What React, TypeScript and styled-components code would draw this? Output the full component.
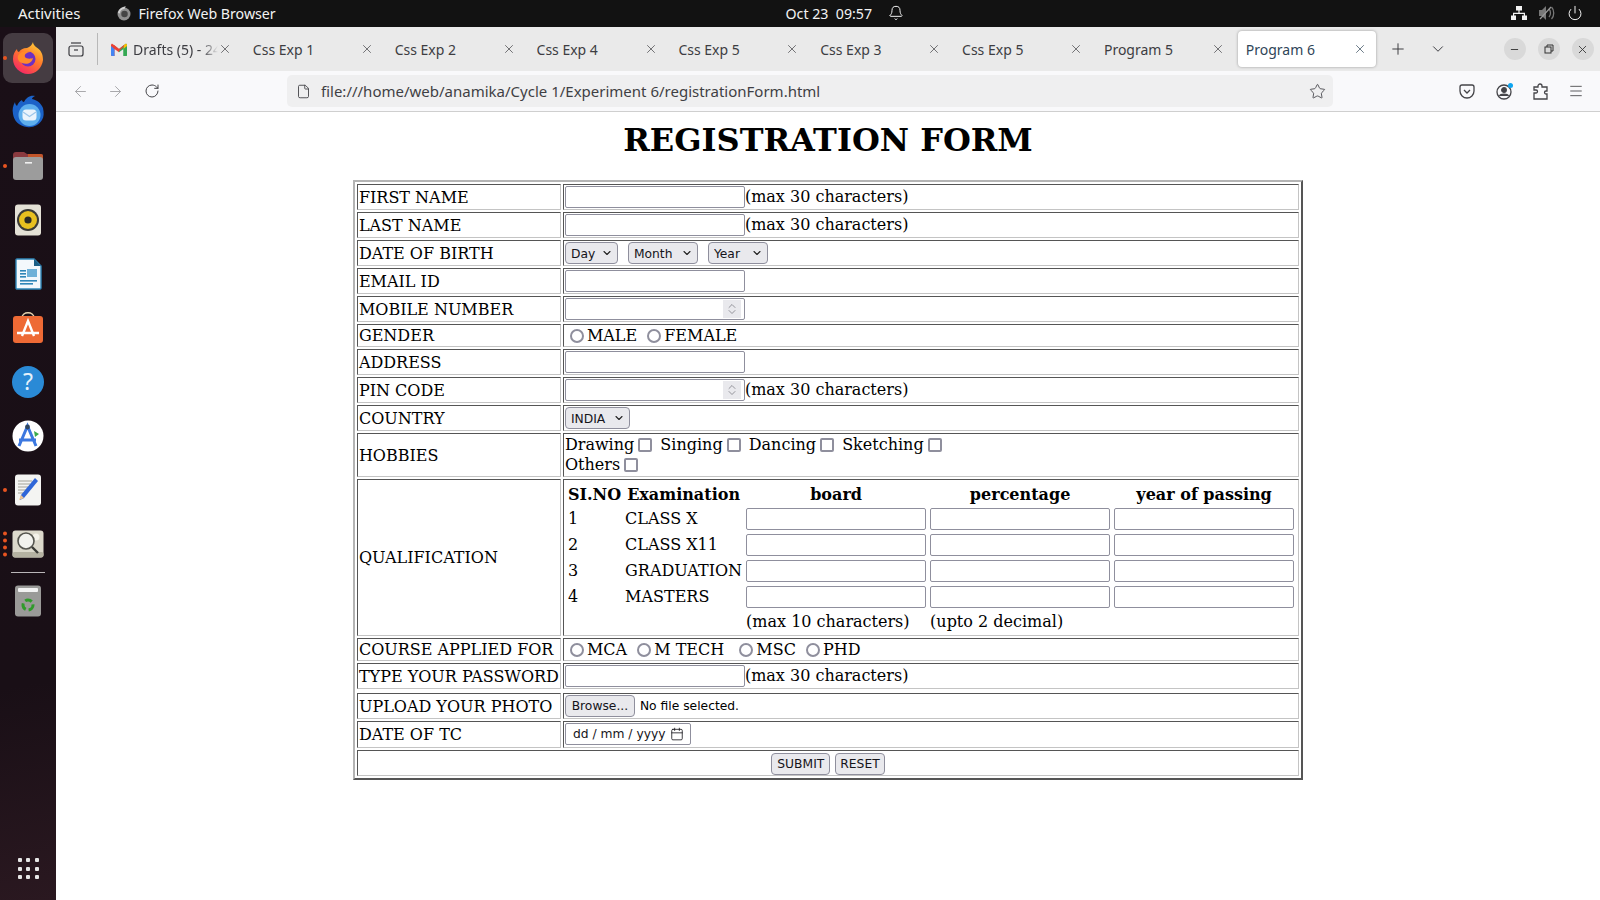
import styled, { createGlobalStyle } from "styled-components"
import { ArrowLeft, ArrowRight, RotateCw, Plus, ChevronDown, ChevronUp, X, Minus, Star, Menu, File, Bell, Power, Calendar } from "lucide-react"

const GlobalStyle = createGlobalStyle`
    html, body {
        margin: 0;
        padding: 0;
        background: #ffffff;
        overflow: hidden;
    }
`
const uiFont = `"Noto Sans", "Open Sans", sans-serif`
const formFont = `"DejaVu Serif", serif`
const controlFont = `"DejaVu Sans", sans-serif`

const Screen = styled.div`
    width: 1600px;
    height: 900px;
    display: flex;
    flex-direction: column;
    overflow: hidden;
`
const TopBar = styled.div`
    height: 27px;
    flex: none;
    background: #121212;
    color: #f2f2f2;
    font-family: ${uiFont};
    font-size: 14.2px;
    display: flex;
    align-items: center;
    padding: 0 17px 1px 18px;
    box-sizing: border-box;
`
const Activities = styled.span`
    font-size: 15px;
`
const AppName = styled.div`
    display: flex;
    align-items: center;
    gap: 7px;
    margin-left: 35px;
    width: 670px;
`
const Clock = styled.div`
    display: flex;
    align-items: center;
    white-space: pre;
    gap: 16px;
`
const Tray = styled.div`
    margin-left: auto;
    display: flex;
    align-items: center;
    gap: 12px;
`
const Main = styled.div`
    flex: 1;
    display: flex;
    min-height: 0;
`
const Dock = styled.div`
    width: 56px;
    flex: none;
    background: linear-gradient(170deg, #1a0f17 0%, #190f16 75%, #2a1820 100%);
    display: flex;
    flex-direction: column;
    align-items: center;
    padding-top: 6px;
    box-sizing: border-box;
`
const DockSlot = styled.div<{ $active?: boolean; $h?: number }>`
    position: relative;
    width: 50px;
    height: ${p => p.$h ?? 54}px;
    flex: none;
    border-radius: 9px;
    background: ${p => (p.$active ? "#453c42" : "transparent")};
    display: flex;
    align-items: center;
    justify-content: center;
`
const RunDots = styled.div`
    position: absolute;
    left: 0;
    top: 50%;
    transform: translateY(-50%);
    display: flex;
    flex-direction: column;
    gap: 3px;
`
const RunDot = styled.span`
    width: 4px;
    height: 4px;
    border-radius: 50%;
    background: #e95420;
`
const DockLine = styled.div`
    width: 34px;
    height: 1px;
    background: #b9b5b8;
    margin-top: 1px;
    margin-bottom: 2px;
    flex: none;
`
const GridButton = styled.div`
    margin-top: auto;
    margin-bottom: 21px;
    display: grid;
    grid-template-columns: repeat(3, 4px);
    gap: 4.5px;
`
const GridDot = styled.span`
    width: 4px;
    height: 4px;
    background: #e6e6e6;
    border-radius: 1px;
`
const Browser = styled.div`
    flex: 1;
    display: flex;
    flex-direction: column;
    min-width: 0;
`
const TabStrip = styled.div`
    height: 44px;
    flex: none;
    background: #eaeaea;
    display: flex;
    align-items: center;
    font-family: ${uiFont};
    font-size: 14px;
    color: #3d3d42;
`
const TabListButton = styled.div`
    width: 42px;
    height: 32px;
    flex: none;
    border-right: 1px solid #b8b8b8;
    padding-right: 2px;
    display: flex;
    align-items: center;
    justify-content: center;
    box-sizing: border-box;
`
const Tabs = styled.div`
    display: flex;
    gap: 3.85px;
    margin-left: 5px;
`
const Tab = styled.div<{ $active?: boolean }>`
    width: 138px;
    height: 36px;
    box-sizing: border-box;
    display: flex;
    align-items: center;
    padding-left: 8px;
    padding-right: 9px;
    border-radius: 4px;
    background: ${p => (p.$active ? "#ffffff" : "transparent")};
    box-shadow: ${p => (p.$active ? "0 0 3px rgba(0,0,0,0.35)" : "none")};
    color: ${p => (p.$active ? "#2f4558" : "#3d3d42")};
`
const TabTitle = styled.span<{ $fade?: boolean }>`
    flex: 1;
    white-space: nowrap;
    overflow: hidden;
    ${p => (p.$fade ? "mask-image: linear-gradient(to right, #000 82%, transparent 100%);" : "")}
`
const TabIcon = styled.svg`
    margin-right: 6px;
    flex: none;
`
const StripButton = styled.div<{ $ml: number }>`
    margin-left: ${p => p.$ml}px;
    display: flex;
    color: #3a3a3f;
`
const WindowButton = styled.div<{ $ml: number }>`
    width: 22px;
    height: 22px;
    border-radius: 50%;
    background: #d9d9d9;
    margin-left: ${p => p.$ml}px;
    display: flex;
    align-items: center;
    justify-content: center;
    color: #333;
`
const NavBar = styled.div`
    height: 41px;
    flex: none;
    background: #f9f9fb;
    border-bottom: 1px solid #cfcfcf;
    box-sizing: border-box;
    display: flex;
    align-items: center;
    font-family: ${uiFont};
    color: #4a4a4f;
`
const NavButton = styled.div<{ $ml: number; $dim?: boolean }>`
    margin-left: ${p => p.$ml}px;
    display: flex;
    color: ${p => (p.$dim ? "#a8a8ab" : "#444448")};
`
const UrlBar = styled.div`
    width: 1046px;
    height: 32px;
    margin-left: 127px;
    background: #efeff0;
    border-radius: 5px;
    display: flex;
    align-items: center;
    padding-left: 9px;
    padding-right: 7px;
    box-sizing: border-box;
    font-size: 15px;
    color: #3f3f44;
`
const UrlText = styled.span`
    margin-left: 10px;
    flex: 1;
`
const Page = styled.div`
    flex: 1;
    background: #ffffff;
    color: #000000;
    font-family: ${formFont};
`
const Title = styled.h1`
    font-family: ${formFont};
    font-size: 32px;
    line-height: 37px;
    font-weight: bold;
    text-align: center;
    margin: 10px 0 21px 0;
`
const FormTable = styled.table`
    margin: 0 auto;
    border-collapse: separate;
    border-spacing: 2px;
    border: 2px solid;
    border-color: #b4b4b4 #555555 #555555 #b4b4b4;
    font-size: 16px;
    line-height: 19px;
`
const Cell = styled.td<{ $w?: number; $h?: number; $pb?: number }>`
    border: 1px solid;
    border-color: #555555 #c4c4c4 #c4c4c4 #555555;
    padding: 1px 1px ${p => p.$pb ?? 1}px 1px;
    box-sizing: border-box;
    white-space: nowrap;
    ${p => (p.$w ? `width: ${p.$w}px;` : "")}
    ${p => (p.$h ? `height: ${p.$h}px;` : "")}
`
const CenterCell = styled(Cell)`
    text-align: center;
    padding: 2px 1px 0 1px;
`
const SpacerCell = styled.td`
    padding: 0;
    height: 0;
    line-height: 0;
`
const Field = styled.input`
    width: 180px;
    height: 22px;
    box-sizing: border-box;
    border: 1px solid #8f8f9d;
    border-radius: 2px;
    padding: 0 4px;
    margin: 0;
    background: #ffffff;
    vertical-align: top;
`
const SpinWrap = styled.span`
    position: relative;
    display: inline-block;
    vertical-align: top;
    height: 22px;
`
const Spinner = styled.span`
    position: absolute;
    right: 4px;
    top: 2px;
    width: 18px;
    height: 18px;
    background: #e9e9ed;
    color: #77777f;
    display: flex;
    flex-direction: column;
    align-items: center;
    justify-content: center;
`
const SpinUp = styled(ChevronUp)`
    flex: none;
    margin-bottom: -3px;
`
const SpinDown = styled(ChevronDown)`
    flex: none;
    margin-top: -3px;
`
const NoteText = styled.span`
    display: inline-block;
    line-height: 20px;
    padding-top: 1px;
    vertical-align: top;
`
const SelectWrap = styled.span<{ $mr?: number }>`
    position: relative;
    display: inline-block;
    vertical-align: top;
    margin-right: ${p => p.$mr ?? 0}px;
    height: 22px;
`
const Select = styled.select<{ $w: number }>`
    appearance: none;
    width: ${p => p.$w}px;
    height: 22px;
    box-sizing: border-box;
    border: 1px solid #8f8f9d;
    border-radius: 4px;
    background: #e9e9ed;
    color: #15141a;
    font-family: ${controlFont};
    font-size: 12.3px;
    padding: 2px 0 0 5px;
    margin: 0;
    display: block;
`
const SelectArrow = styled.span`
    position: absolute;
    right: 5px;
    top: 5px;
    display: flex;
    color: #222;
    pointer-events: none;
`
const Radio = styled.input`
    appearance: none;
    width: 14px;
    height: 14px;
    box-sizing: border-box;
    border: 2px solid #8f8f9d;
    border-radius: 50%;
    background: #ffffff;
    margin: 3px 3px 0 5px;
    vertical-align: -2px;
`
const Check = styled.input`
    appearance: none;
    width: 14px;
    height: 14px;
    box-sizing: border-box;
    border: 2px solid #8f8f9d;
    border-radius: 2px;
    background: #ffffff;
    margin: 3px 3px 0 4px;
    vertical-align: -2px;
`
const HobbyLines = styled.div`
    line-height: 20px;
`
const InnerTable = styled.table`
    border-collapse: separate;
    border-spacing: 2px;
`
const InnerHead = styled.th`
    padding: 2px 1px 0 1px;
    line-height: 20px;
    font-weight: bold;
    text-align: center;
`
const InnerCell = styled.td`
    padding: 1px;
`
const InnerText = styled(InnerCell)`
    padding: 2px 1px 0 1px;
    vertical-align: top;
`
const NoteCell = styled(InnerCell)`
    line-height: 19px;
`
const FormButton = styled.button<{ $mr?: number; $px?: number }>`
    height: 22px;
    box-sizing: border-box;
    border: 1px solid #8f8f9d;
    border-radius: 4px;
    background: #e9e9ed;
    color: #15141a;
    font-family: ${controlFont};
    font-size: 12.3px;
    padding: 0 ${p => p.$px ?? 5}px;
    margin: 0 ${p => p.$mr ?? 0}px 0 0;
    vertical-align: top;
`
const BrowseButton = styled(FormButton)`
    width: 70px;
`
const FileText = styled.span`
    font-family: ${controlFont};
    font-size: 12.3px;
    margin-left: 5px;
    line-height: 22px;
`
const DateBox = styled.div`
    width: 126px;
    height: 22px;
    box-sizing: border-box;
    border: 1px solid #8f8f9d;
    border-radius: 2px;
    display: flex;
    align-items: center;
    justify-content: space-between;
    padding: 0 6px 0 7px;
    font-family: ${controlFont};
    font-size: 12.3px;
    color: #15141a;
    white-space: nowrap;
`
const DateIcon = styled(Calendar)`
    flex: none;
`

const tabs = ["Css Exp 1", "Css Exp 2", "Css Exp 4", "Css Exp 5", "Css Exp 3", "Css Exp 5", "Program 5"]

function FirefoxIcon({ size = 32 }: { size?: number }) {
    return (
        <svg width={size} height={size} viewBox="0 0 32 32">
            <defs>
                <linearGradient id="ffa" x1="0.8" y1="0" x2="0.2" y2="1">
                    <stop offset="0" stopColor="#ffd23a" />
                    <stop offset="0.45" stopColor="#ff7a2a" />
                    <stop offset="1" stopColor="#f5206a" />
                </linearGradient>
            </defs>
            <path d="M1 17C1 12 3 9 5 7c0 2 1 3 2 3 1-2 4-4 8-4 3-1 5-3 6-6 0 2 1 3 3 5 5 3 7 7 7 13-1 8-7 14-15 14S1 25 1 17z" fill="url(#ffa)" />
            <circle cx="16" cy="17" r="7.5" fill="#6e2fc2" />
            <path d="M6 14c2-5 9-6 14-4-5 0-8 2-7 5 1 2 6 2 8 1-1 5-6 7-11 5-3-1-5-4-4-7z" fill="#ff8a2a" />
        </svg>
    )
}
function ThunderbirdIcon() {
    return (
        <svg width="34" height="34" viewBox="0 0 34 34">
            <path d="M2 20c-1-5 0-8 2-12 0 2 1 3 2 4 1-3 3-5 5-6 0 1 1 2 2 2 2-4 6-7 11-6-2 1-3 2-3 3 5 1 9 4 11 9 1 5 1 9-1 12-3 5-9 8-15 7C8 32 3 27 2 20z" fill="#1b62c8" />
            <circle cx="18.5" cy="21" r="11" fill="#5fb0ee" />
            <rect x="11.5" y="15.5" width="14" height="11" rx="3.5" fill="#eaf4fc" />
            <path d="M12 18l6.5 4.500L25 18" fill="none" stroke="#9cc6ea" strokeWidth="1.3" />
        </svg>
    )
}
function FilesIcon() {
    return (
        <svg width="32" height="30" viewBox="0 0 32 30">
            <path d="M1 4a3 3 0 0 1 3-3h8l3 2h14a2 2 0 0 1 2 2v4H1z" fill="#8a3a3f" />
            <path d="M16 3h13a2 2 0 0 1 2 2v4H16z" fill="#c2552a" />
            <rect x="1" y="6" width="30" height="23" rx="3" fill="#9c9c9c" />
            <rect x="13" y="11" width="7" height="1.6" fill="#f0f0f0" />
        </svg>
    )
}
function RhythmIcon() {
    return (
        <svg width="28" height="32" viewBox="0 0 28 32">
            <rect x="1" y="0.5" width="26" height="31" rx="3" fill="#e4e1d6" />
            <circle cx="14" cy="16" r="11" fill="#3a3a36" />
            <circle cx="14" cy="16" r="9" fill="#e8c01f" />
            <circle cx="14" cy="16" r="3.6" fill="#2a2a26" />
        </svg>
    )
}
function WriterIcon() {
    return (
        <svg width="28" height="32" viewBox="0 0 28 32">
            <path d="M2 2a1 1 0 0 1 1-1h17l7 7v22a1 1 0 0 1-1 1H3a1 1 0 0 1-1-1z" fill="#f3f8fc" stroke="#2f86b8" strokeWidth="1.4" />
            <path d="M20 1l7 7h-7z" fill="#1c5f86" />
            <rect x="6" y="12" width="6" height="1.6" fill="#2f86b8" />
            <rect x="6" y="15" width="6" height="1.6" fill="#2f86b8" />
            <rect x="6" y="18" width="6" height="1.6" fill="#2f86b8" />
            <rect x="13" y="11" width="10" height="8" fill="#6fb1d8" />
            <rect x="6" y="22" width="17" height="1.6" fill="#2f86b8" />
            <rect x="6" y="25" width="13" height="1.6" fill="#2f86b8" />
        </svg>
    )
}
function SoftwareIcon() {
    return (
        <svg width="32" height="32" viewBox="0 0 32 32">
            <path d="M10 6c0-7 12-7 12 0" fill="none" stroke="#e8d5b0" strokeWidth="1.5" />
            <rect x="1" y="4" width="30" height="27" rx="3" fill="#ee6a35" />
            <path d="M10 24L16 9l6 15M5 21h22" fill="none" stroke="#ffffff" strokeWidth="2.4" />
        </svg>
    )
}
function HelpIcon() {
    return (
        <svg width="32" height="32" viewBox="0 0 32 32">
            <circle cx="16" cy="16" r="16" fill="#2a8ad6" />
            <text x="16" y="24" textAnchor="middle" fontFamily={uiFont} fontSize="23" fill="#e6f2fb">?</text>
        </svg>
    )
}
function UpdaterIcon() {
    return (
        <svg width="32" height="32" viewBox="0 0 32 32">
            <circle cx="16" cy="16" r="15.5" fill="#ffffff" />
            <path d="M7 26L15.5 6 24 26M7 20h17" fill="none" stroke="#3c78e0" strokeWidth="3" />
            <circle cx="15.5" cy="7" r="2.4" fill="#30465f" />
            <path d="M22 11l5 3-4 3z" fill="#3bab4a" />
        </svg>
    )
}
function EditorIcon() {
    return (
        <svg width="28" height="32" viewBox="0 0 28 32">
            <rect x="1" y="0.5" width="26" height="31" rx="3" fill="#f4f4f2" />
            <path d="M4 7h14M4 10h12M4 13h10M4 16h8M4 19h6" stroke="#bdbdb6" strokeWidth="1.3" />
            <path d="M24 7l-14 17-4 2 1-5L21 4z" fill="#2f66d8" />
            <path d="M7 21l3 3-5 2z" fill="#f0c490" />
        </svg>
    )
}
function LensIcon() {
    return (
        <svg width="32" height="28" viewBox="0 0 32 28">
            <rect x="0.5" y="0.5" width="31" height="27" rx="3" fill="#dcd9cc" />
            <rect x="0.5" y="22" width="31" height="5.5" rx="2" fill="#b5b2a2" />
            <circle cx="24" cy="7" r="3.5" fill="#f4f2ea" />
            <circle cx="14" cy="11" r="8" fill="#f2f2ee" stroke="#55554f" strokeWidth="1.6" />
            <path d="M20 17l6 6" stroke="#3a3a36" strokeWidth="2.4" />
        </svg>
    )
}
function TrashIcon() {
    return (
        <svg width="28" height="32" viewBox="0 0 28 32">
            <rect x="1" y="0.5" width="26" height="31" rx="3" fill="#9a9a98" />
            <rect x="4" y="3" width="20" height="4" rx="1" fill="#f2f2f2" />
            <circle cx="14" cy="20" r="5" fill="none" stroke="#2f9a2a" strokeWidth="3" strokeDasharray="7 3" />
        </svg>
    )
}
function GmailIcon() {
    return (
        <TabIcon width="16" height="13" viewBox="0 0 16 13">
            <path d="M0 2.5V12a1 1 0 0 0 1 1h2.5V6L8 9.3V6L3 2 1.6 1C.8.5 0 1.2 0 2.5z" fill="#ea4335" />
            <path d="M16 2.5V12a1 1 0 0 1-1 1h-2.5V6L8 9.3V6l5-4 1.4-1c.8-.5 1.6.2 1.6 1.5z" fill="#34a853" />
            <path d="M3.5 6V13H1a1 1 0 0 1-1-1V3z" fill="#4285f4" />
            <path d="M12.5 6V13H15a1 1 0 0 0 1-1V3z" fill="#34a853" />
            <path d="M3 2l5 4 5-4 1 .5L8 8 2 2.5z" fill="#ea4335" />
            <path d="M13 2l1.4-1c.8-.5 1.6.2 1.6 1.5V3l-3.5 3z" fill="#fbbc04" />
        </TabIcon>
    )
}
function FirefoxIconGrey() {
    return (
        <svg width="16" height="16" viewBox="0 0 32 32">
            <circle cx="16" cy="18" r="13" fill="#8f8f8f" />
            <circle cx="17" cy="18" r="6.5" fill="#444" />
            <path d="M4 16C5 8 12 3 20 3c-2 2-3 4-3 5-5 0-9 3-9 9z" fill="#d0d0d0" />
        </svg>
    )
}
function Combo({ w, label, mr }: { w: number; label: string; mr?: number }) {
    return (
        <SelectWrap $mr={mr}>
            <Select $w={w}><option>{label}</option></Select>
            <SelectArrow><ChevronDown size={12} strokeWidth={2.2} /></SelectArrow>
        </SelectWrap>
    )
}
function NumberField() {
    return (
        <SpinWrap>
            <Field type="text" />
            <Spinner>
                <SpinUp size={12} strokeWidth={1.5} />
                <SpinDown size={12} strokeWidth={1.5} />
            </Spinner>
        </SpinWrap>
    )
}
function Row({ label, children, h = 26, pb }: { label: string; children: React.ReactNode; h?: number; pb?: number }) {
    return (
        <tr>
            <Cell $h={h} $pb={pb}>{label}</Cell>
            <Cell $w={735} $h={h} $pb={pb}>{children}</Cell>
        </tr>
    )
}

function App() {
    const quals = ["CLASS X", "CLASS X11", "GRADUATION", "MASTERS"]
    return (
        <Screen>
            <GlobalStyle />
            <TopBar>
                <Activities>Activities</Activities>
                <AppName>
                    <FirefoxIconGrey />
                    Firefox Web Browser
                </AppName>
                <Clock>
                    <span>Oct 23  09:57</span>
                    <Bell size={16} strokeWidth={1.5} />
                </Clock>
                <Tray>
                    <svg width="16" height="14" viewBox="0 0 16 14"><path d="M5 0h6v4.5H5zM0 9.5h5V14H0zM11 9.5h5V14h-5zM7.4 4.5h1.2v2.2H14v2.8h-1.2V8H3.2v1.5H2V6.7h5.4z" fill="#f2f2f2" /></svg>
                    <svg width="16" height="14" viewBox="0 0 16 14"><path d="M0 4h3l4-4v14l-4-4H0z" fill="#777" /><path d="M10 3c2 2 2 6 0 8M12.5 1c3 3 3 9 0 12" fill="none" stroke="#777" strokeWidth="1.3" /><path d="M1 13L12 1" stroke="#999" strokeWidth="1.2" /></svg>
                    <Power size={16} strokeWidth={1.5} />
                </Tray>
            </TopBar>
            <Main>
                <Dock>
                    <DockSlot $active $h={50}><RunDots><RunDot /></RunDots><FirefoxIcon /></DockSlot>
                    <DockSlot $h={56}><ThunderbirdIcon /></DockSlot>
                    <DockSlot><RunDots><RunDot /></RunDots><FilesIcon /></DockSlot>
                    <DockSlot><RhythmIcon /></DockSlot>
                    <DockSlot><WriterIcon /></DockSlot>
                    <DockSlot><SoftwareIcon /></DockSlot>
                    <DockSlot><HelpIcon /></DockSlot>
                    <DockSlot><UpdaterIcon /></DockSlot>
                    <DockSlot><RunDots><RunDot /></RunDots><EditorIcon /></DockSlot>
                    <DockSlot><RunDots><RunDot /><RunDot /><RunDot /><RunDot /></RunDots><LensIcon /></DockSlot>
                    <DockLine />
                    <DockSlot $h={52}><TrashIcon /></DockSlot>
                    <GridButton>
                        {Array.from({ length: 9 }, (_, i) => <GridDot key={i} />)}
                    </GridButton>
                </Dock>
                <Browser>
                    <TabStrip>
                        <TabListButton>
                            <svg width="16" height="15" viewBox="0 0 16 15" fill="none" stroke="#3a3a3f" strokeWidth="1.2">
                                <path d="M3 1h10" />
                                <rect x="1" y="4" width="14" height="10" rx="2" />
                                <path d="M6 8h4" />
                            </svg>
                        </TabListButton>
                        <Tabs>
                            <Tab>
                                <GmailIcon />
                                <TabTitle $fade>Drafts (5) - 24</TabTitle>
                                <X size={14} strokeWidth={1.2} />
                            </Tab>
                            {tabs.map((t, i) => (
                                <Tab key={i}>
                                    <TabTitle>{t}</TabTitle>
                                    <X size={14} strokeWidth={1.2} />
                                </Tab>
                            ))}
                            <Tab $active>
                                <TabTitle>Program 6</TabTitle>
                                <X size={14} strokeWidth={1.2} />
                            </Tab>
                        </Tabs>
                        <StripButton $ml={13}><Plus size={18} strokeWidth={1.3} /></StripButton>
                        <StripButton $ml={22}><ChevronDown size={18} strokeWidth={1.3} /></StripButton>
                        <WindowButton $ml={57}><Minus size={11} /></WindowButton>
                        <WindowButton $ml={12}>
                            <svg width="10" height="10" viewBox="0 0 10 10" fill="none" stroke="#333" strokeWidth="1"><rect x="1" y="3" width="6" height="6" /><path d="M3 3V1h6v6H7" /></svg>
                        </WindowButton>
                        <WindowButton $ml={12}><X size={13} strokeWidth={1.6} /></WindowButton>
                    </TabStrip>
                    <NavBar>
                        <NavButton $ml={16} $dim><ArrowLeft size={17} strokeWidth={1.4} /></NavButton>
                        <NavButton $ml={18} $dim><ArrowRight size={17} strokeWidth={1.4} /></NavButton>
                        <NavButton $ml={20}><RotateCw size={16} strokeWidth={1.5} /></NavButton>
                        <UrlBar>
                            <File size={15} strokeWidth={1.4} />
                            <UrlText>file:///home/web/anamika/Cycle 1/Experiment 6/registrationForm.html</UrlText>
                            <Star size={17} strokeWidth={1.2} />
                        </UrlBar>
                        <NavButton $ml={126}>
                            <svg width="16" height="15" viewBox="0 0 16 15" fill="none" stroke="#444448" strokeWidth="1.3"><path d="M1 3a2 2 0 0 1 2-2h10a2 2 0 0 1 2 2v4a7 7 0 0 1-14 0z" /><path d="M5 6l3 3 3-3" /></svg>
                        </NavButton>
                        <NavButton $ml={21}>
                            <svg width="18" height="19" viewBox="0 0 18 19" fill="none" stroke="#444448" strokeWidth="1.3">
                                <circle cx="8" cy="10" r="7" />
                                <circle cx="8" cy="8" r="2.3" fill="#444448" />
                                <path d="M3.5 14c1-2.5 8-2.5 9 0" fill="#444448" />
                                <circle cx="14.5" cy="3.5" r="2.5" fill="#0ea5f0" stroke="none" />
                            </svg>
                        </NavButton>
                        <NavButton $ml={19}>
                            <svg width="16" height="17" viewBox="0 0 16 17" fill="none" stroke="#444448" strokeWidth="1.3"><path d="M1 16V10h2a1.5 1.5 0 0 0 0-3H1V4h4V3a2 2 0 0 1 4 0v1h5v4h-1a1.5 1.5 0 0 0 0 3h1v5z" /></svg>
                        </NavButton>
                        <NavButton $ml={19}><Menu size={16} strokeWidth={1.3} /></NavButton>
                    </NavBar>
                    <Page>
                        <Title>REGISTRATION FORM</Title>
                        <FormTable>
                            <tbody>
                                <Row label="FIRST NAME"><Field /><NoteText>(max 30 characters)</NoteText></Row>
                                <Row label="LAST NAME"><Field /><NoteText>(max 30 characters)</NoteText></Row>
                                <Row label="DATE OF BIRTH">
                                    <Combo w={53} label="Day" mr={10} />
                                    <Combo w={70} label="Month" mr={10} />
                                    <Combo w={60} label="Year" />
                                </Row>
                                <Row label="EMAIL ID"><Field /></Row>
                                <Row label="MOBILE NUMBER"><NumberField /></Row>
                                <Row label="GENDER" h={23}>
                                    <Radio type="radio" />MALE <Radio type="radio" />FEMALE
                                </Row>
                                <Row label="ADDRESS"><Field /></Row>
                                <Row label="PIN CODE"><NumberField /><NoteText>(max 30 characters)</NoteText></Row>
                                <Row label="COUNTRY"><Combo w={65} label="INDIA" /></Row>
                                <Row label="HOBBIES" h={44}>
                                    <HobbyLines>
                                        Drawing<Check type="checkbox" /> Singing<Check type="checkbox" /> Dancing<Check type="checkbox" /> Sketching<Check type="checkbox" /><br />
                                        Others<Check type="checkbox" />
                                    </HobbyLines>
                                </Row>
                                <Row label="QUALIFICATION">
                                    <InnerTable>
                                        <tbody>
                                            <tr>
                                                <InnerHead>SI.NO</InnerHead>
                                                <InnerHead>Examination</InnerHead>
                                                <InnerHead>board</InnerHead>
                                                <InnerHead>percentage</InnerHead>
                                                <InnerHead>year of passing</InnerHead>
                                            </tr>
                                            {quals.map((q, i) => (
                                                <tr key={q}>
                                                    <InnerText>{i + 1}</InnerText>
                                                    <InnerText>{q}</InnerText>
                                                    <InnerCell><Field /></InnerCell>
                                                    <InnerCell><Field /></InnerCell>
                                                    <InnerCell><Field /></InnerCell>
                                                </tr>
                                            ))}
                                            <tr>
                                                <NoteCell />
                                                <NoteCell />
                                                <NoteCell>(max 10 characters)</NoteCell>
                                                <NoteCell>(upto 2 decimal)</NoteCell>
                                                <NoteCell />
                                            </tr>
                                        </tbody>
                                    </InnerTable>
                                </Row>
                                <Row label="COURSE APPLIED FOR" h={23}>
                                    <Radio type="radio" />MCA <Radio type="radio" />M TECH&nbsp; <Radio type="radio" />MSC <Radio type="radio" />PHD
                                </Row>
                                <Row label="TYPE YOUR PASSWORD"><Field type="password" /><NoteText>(max 30 characters)</NoteText></Row>
                                <tr><SpacerCell colSpan={2} /></tr>
                                <Row label="UPLOAD YOUR PHOTO">
                                    <BrowseButton>Browse...</BrowseButton><FileText>No file selected.</FileText>
                                </Row>
                                <Row label="DATE OF TC" h={27} pb={2}>
                                    <DateBox>dd / mm / yyyy<DateIcon size={14} strokeWidth={1.4} /></DateBox>
                                </Row>
                                <tr>
                                    <CenterCell colSpan={2} $h={26}>
                                        <FormButton $mr={5}>SUBMIT</FormButton>
                                        <FormButton $px={4}>RESET</FormButton>
                                    </CenterCell>
                                </tr>
                            </tbody>
                        </FormTable>
                    </Page>
                </Browser>
            </Main>
        </Screen>
    )
}

export default App
